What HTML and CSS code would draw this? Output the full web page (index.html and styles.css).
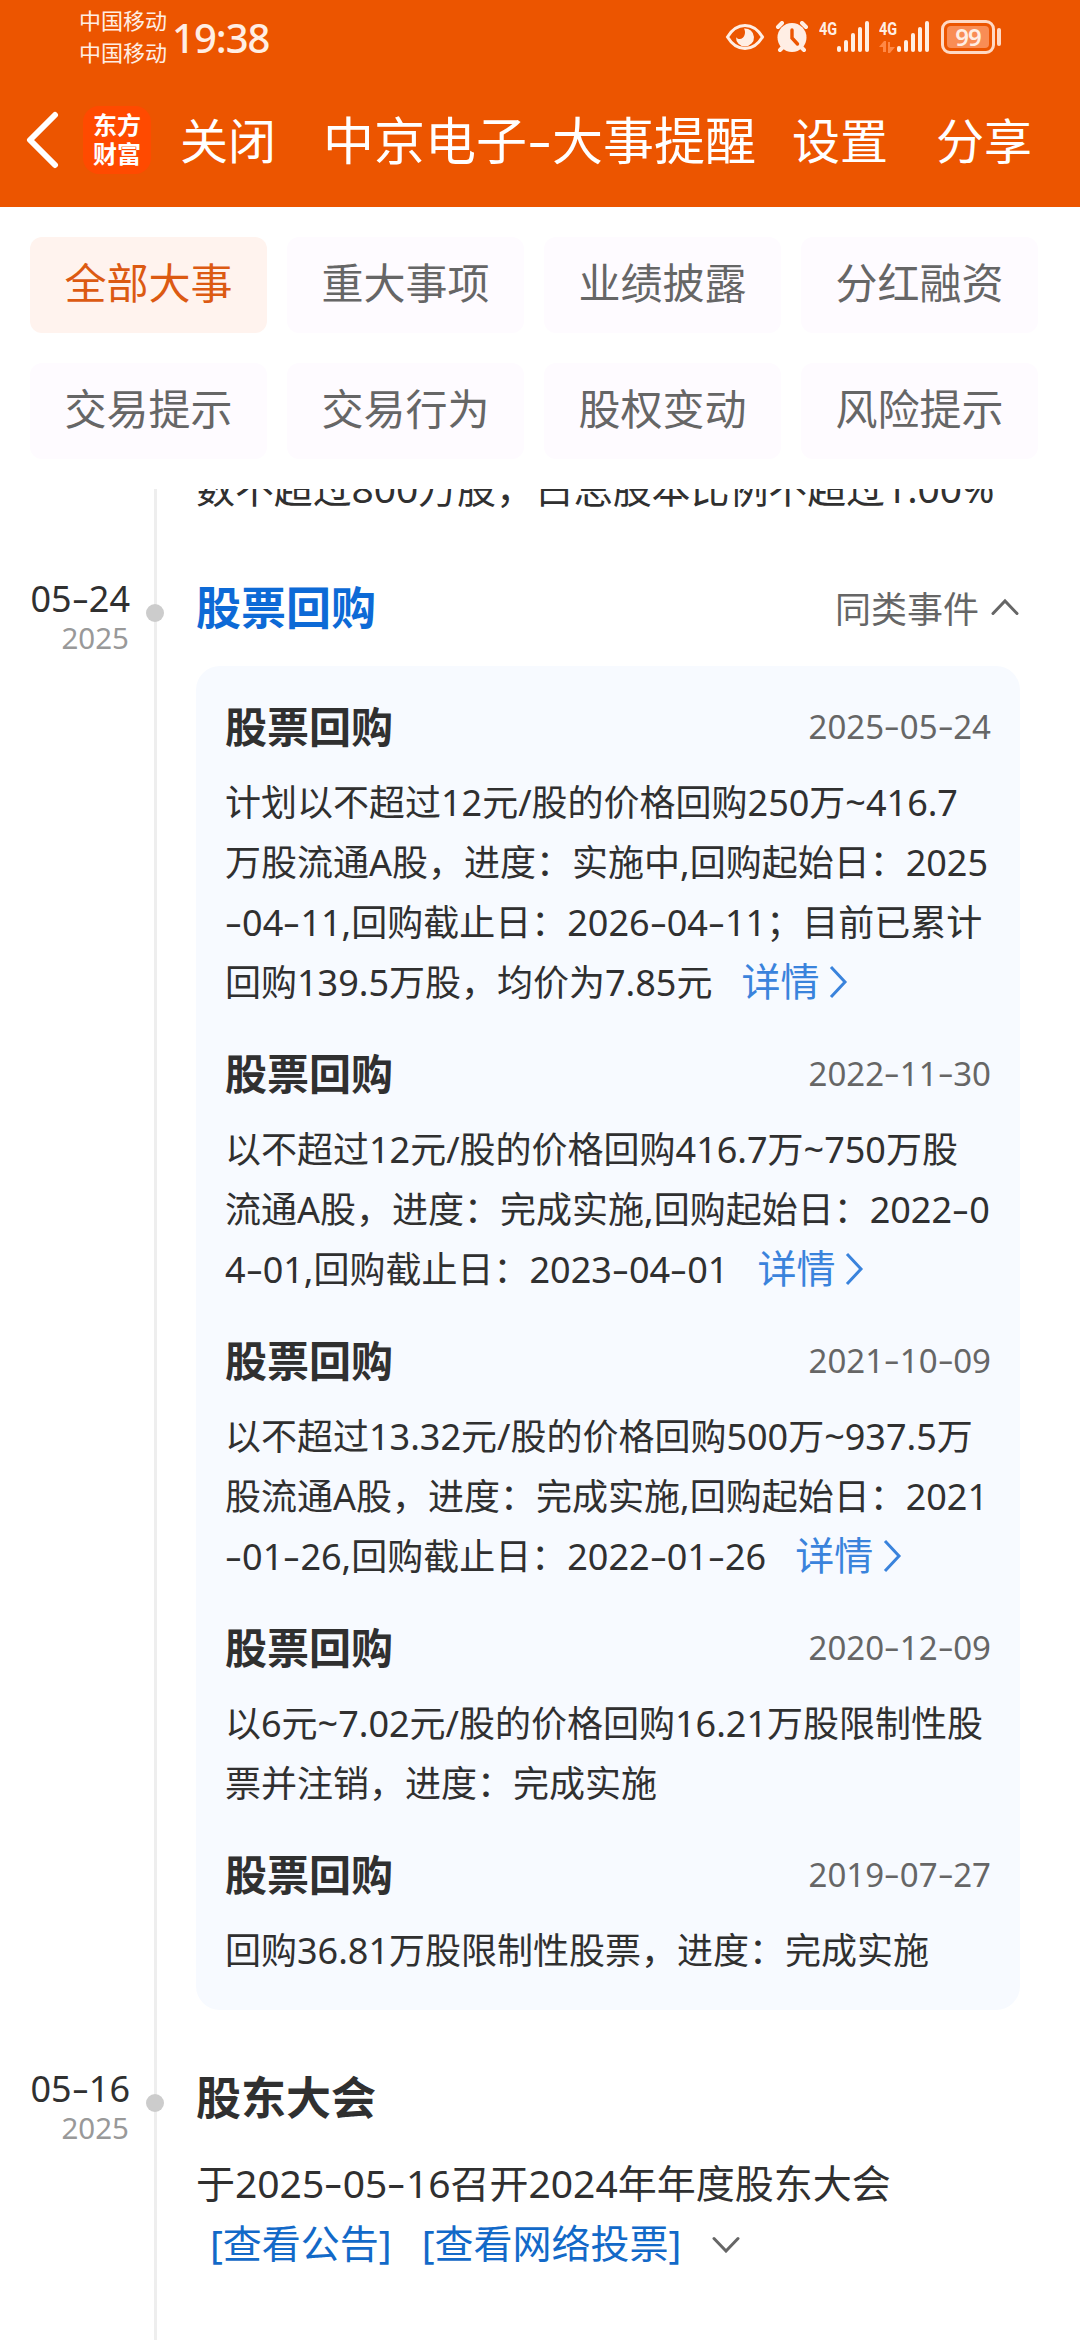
FILE: index.html
```html
<!DOCTYPE html>
<html lang="zh-CN">
<head>
  <meta charset="UTF-8">
  <meta name="viewport" content="width=device-width, initial-scale=1.0">
  <title>中京电子-大事提醒</title>
  <link rel="stylesheet" href="styles.css">
</head>
<body>

  <header class="header">
    <!-- Status bar -->
    <div class="status-bar">
      <div class="carriers">
        <span>中国移动</span>
        <span>中国移动</span>
      </div>
      <span class="time">19:38</span>

      <div class="status-icons">
        <svg class="icon-eye" width="40" height="28" viewBox="0 0 40 28">
          <path d="M2.500 14C7 6.500 13 2.500 20 2.500S33 6.500 37.500 14C33 21.500 27 25.500 20 25.500S7 21.500 2.500 14z" fill="none" stroke="#ffeee4" stroke-width="3"/>
          <path d="M19 5.500a9 9 0 1 1-8 8.500c1.500 2.500 4.800 2.600 6.800.8 2.300-2.100 3-6 1.200-9.300z" fill="#ffeee4"/>
        </svg>
        <svg class="icon-alarm" width="34" height="32" viewBox="0 0 34 32">
          <g stroke="#ffeee4" stroke-width="4" stroke-linecap="round">
            <path d="M3 6l4-4M27 2l4 4M5 29l4-4M29 29l-4-4"/>
          </g>
          <circle cx="17" cy="16.500" r="14.500" fill="#ffeee4"/>
          <path d="M17 9v8l5.500 6" fill="none" stroke="#ec5500" stroke-width="3.400" stroke-linecap="round"/>
        </svg>
        <div class="signal">
          <span class="net">4G</span>
          <svg width="33" height="32" viewBox="0 0 33 32" fill="#ffeee4">
            <rect x="0" y="25" width="4" height="6" rx="2"/>
            <rect x="7" y="19" width="4" height="12" rx="2"/>
            <rect x="14" y="12" width="4" height="19" rx="2"/>
            <rect x="21" y="6" width="4" height="25" rx="2"/>
            <rect x="28" y="0" width="4" height="31" rx="2"/>
          </svg>
        </div>
        <div class="signal">
          <div class="net-box">
            <span class="net">4G</span>
            <svg class="arrows" width="16" height="12" viewBox="0 0 16 12" fill="#ff8845">
              <path d="M0 6l5-6h2v11H4V6zM16 6l-5 6H9V1h2v5z"/>
            </svg>
          </div>
          <svg width="33" height="32" viewBox="0 0 33 32" fill="#ffeee4">
            <rect x="0" y="25" width="4" height="6" rx="2"/>
            <rect x="7" y="19" width="4" height="12" rx="2"/>
            <rect x="14" y="12" width="4" height="19" rx="2"/>
            <rect x="21" y="6" width="4" height="25" rx="2"/>
            <rect x="28" y="0" width="4" height="31" rx="2"/>
          </svg>
        </div>
        <div class="battery"><span>99</span></div>
        <div class="battery-tip"></div>
      </div>
    </div>

    <!-- Navigation -->
    <nav class="nav">
      <svg class="back" width="34" height="58" viewBox="0 0 34 58">
        <path d="M29 4L4 29l25 25" fill="none" stroke="#fff" stroke-width="6" stroke-linecap="round" stroke-linejoin="round"/>
      </svg>
      <div class="logo">东方<br>财富</div>
      <a class="nav-link close">关闭</a>
      <h1 class="nav-title">中京电子<i class="dash">-</i>大事提醒</h1>
      <a class="nav-link">设置</a>
      <a class="nav-link share">分享</a>
    </nav>
  </header>

  <!-- Filter tabs -->
  <div class="tabs">
    <div class="tab active">全部大事</div>
    <div class="tab">重大事项</div>
    <div class="tab">业绩披露</div>
    <div class="tab">分红融资</div>
    <div class="tab">交易提示</div>
    <div class="tab">交易行为</div>
    <div class="tab">股权变动</div>
    <div class="tab">风险提示</div>
  </div>

  <!-- Timeline -->
  <main class="timeline">
    <div class="event previous">
      <div class="event-date"></div>
      <div class="axis"></div>
      <div class="event-content">
        <p class="event-text">数不超过800万股，占总股本比例不超过1.00%</p>
      </div>
    </div>

    <div class="event">
      <div class="event-date">
        <div class="day">05<i class="dash">-</i>24</div>
        <div class="year">2025</div>
      </div>
      <div class="axis"><i class="dot"></i></div>
      <div class="event-content">
        <div class="event-head">
          <h2 class="blue">股票回购</h2>
          <div class="similar">同类事件
            <svg width="30" height="20" viewBox="0 0 30 20">
              <path d="M3 16.500L15 4l12 12.500" fill="none" stroke="#666" stroke-width="3" stroke-linecap="round"/>
            </svg>
          </div>
        </div>

        <div class="card">
          <div class="item">
            <div class="item-head"><h3>股票回购</h3><span class="item-date">2025<i class="dash">-</i>05<i class="dash">-</i>24</span></div>
            <p>计划以不超过12元/股的价格回购250万~416.7<br>万股流通A股，进度：实施中,回购起始日：2025<br><i class="dash">-</i>04<i class="dash">-</i>11,回购截止日：2026<i class="dash">-</i>04<i class="dash">-</i>11；目前已累计<br>回购139.5万股，均价为7.85元<a class="detail">详情<svg width="20" height="34" viewBox="0 0 20 34"><path d="M3 2l14 15L3 32" fill="none" stroke="#3a83dc" stroke-width="3"/></svg></a></p>
          </div>
          <div class="item">
            <div class="item-head"><h3>股票回购</h3><span class="item-date">2022<i class="dash">-</i>11<i class="dash">-</i>30</span></div>
            <p>以不超过12元/股的价格回购416.7万~750万股<br>流通A股，进度：完成实施,回购起始日：2022<i class="dash">-</i>0<br>4<i class="dash">-</i>01,回购截止日：2023<i class="dash">-</i>04<i class="dash">-</i>01<a class="detail">详情<svg width="20" height="34" viewBox="0 0 20 34"><path d="M3 2l14 15L3 32" fill="none" stroke="#3a83dc" stroke-width="3"/></svg></a></p>
          </div>
          <div class="item">
            <div class="item-head"><h3>股票回购</h3><span class="item-date">2021<i class="dash">-</i>10<i class="dash">-</i>09</span></div>
            <p>以不超过13.32元/股的价格回购500万~937.5万<br>股流通A股，进度：完成实施,回购起始日：2021<br><i class="dash">-</i>01<i class="dash">-</i>26,回购截止日：2022<i class="dash">-</i>01<i class="dash">-</i>26<a class="detail">详情<svg width="20" height="34" viewBox="0 0 20 34"><path d="M3 2l14 15L3 32" fill="none" stroke="#3a83dc" stroke-width="3"/></svg></a></p>
          </div>
          <div class="item">
            <div class="item-head"><h3>股票回购</h3><span class="item-date">2020<i class="dash">-</i>12<i class="dash">-</i>09</span></div>
            <p>以6元~7.02元/股的价格回购16.21万股限制性股<br>票并注销，进度：完成实施</p>
          </div>
          <div class="item">
            <div class="item-head"><h3>股票回购</h3><span class="item-date">2019<i class="dash">-</i>07<i class="dash">-</i>27</span></div>
            <p>回购36.81万股限制性股票，进度：完成实施</p>
          </div>
        </div>
      </div>
    </div>

    <div class="event last">
      <div class="event-date">
        <div class="day">05<i class="dash">-</i>16</div>
        <div class="year">2025</div>
      </div>
      <div class="axis"><i class="dot"></i></div>
      <div class="event-content">
        <div class="event-head">
          <h2>股东大会</h2>
        </div>
        <p class="event-text meeting">于2025<i class="dash">-</i>05<i class="dash">-</i>16召开2024年年度股东大会</p>
        <div class="links">
          <a>[查看公告]</a>
          <a>[查看网络投票]</a>
          <svg width="30" height="20" viewBox="0 0 30 20">
            <path d="M3 5.500L15 18 27 5.500" fill="none" stroke="#666" stroke-width="3" stroke-linecap="round"/>
          </svg>
        </div>
      </div>
    </div>
  </main>

</body>
</html>
```
FILE: styles.css
```css
* {
  box-sizing: border-box;
}

body {
  margin: 0;
  width: 1080px;
  height: 2340px;
  display: flex;
  flex-direction: column;
  overflow: hidden;
  background-color: #fff;
  color: #303030;
  font-family: "Noto Sans", "Noto Sans CJK SC", sans-serif;
  white-space: nowrap;
}

h1, h2, h3, p {
  margin: 0;
}

svg {
  flex: none;
  display: block;
}

/* Wide hyphen used in dates and the page title */
.dash {
  display: inline-block;
  width: 0.475em;
  font-style: normal;
  text-align: center;
  transform: translateY(-1px) scaleX(1.5);
}

/* Header */
.header {
  height: 207px;
  flex: none;
  background-color: #ec5500;
  color: #fff;
}

.status-bar {
  height: 75px;
  display: flex;
  align-items: center;
  padding-left: 79px;
  padding-right: 79px;
  color: #ffeee4;
}

.carriers {
  display: flex;
  flex-direction: column;
  padding-bottom: 4px;
  font-size: 22px;
  line-height: 32px;
}

.time {
  margin-left: 5px;
  font-size: 40px;
  font-weight: 500;
  line-height: 73px;
  letter-spacing: -1px;
}

.status-icons {
  margin-left: auto;
  display: flex;
  align-items: center;
  padding-bottom: 2px;
}

.icon-alarm {
  margin-left: 10px;
}

.signal {
  display: flex;
  align-items: flex-start;
  height: 32px;
  margin-left: 10px;
}

.signal + .signal {
  margin-left: 9px;
}

.net {
  display: block;
  width: 18px;
  font-family: "Roboto", sans-serif;
  font-size: 19px;
  font-weight: 700;
  line-height: 15px;
  transform: scaleX(0.76);
  transform-origin: left;
}

.net-box {
  display: flex;
  flex-direction: column;
  gap: 5px;
}

.battery {
  width: 54px;
  height: 34px;
  margin-left: 11px;
  padding: 3px;
  border: 3px solid #ffd9c4;
  border-radius: 9px;
}

.battery span {
  display: block;
  height: 22px;
  border-radius: 4px;
  background-color: #f98d55;
  font-size: 24px;
  font-weight: 600;
  line-height: 21px;
  letter-spacing: -1px;
  text-align: center;
}

.battery-tip {
  width: 4px;
  height: 18px;
  margin-left: 2px;
  border-radius: 2px;
  background-color: #ffd9c4;
}

.nav {
  height: 132px;
  display: flex;
  align-items: center;
  padding-left: 26px;
  padding-bottom: 3px;
}

.logo {
  width: 68px;
  height: 68px;
  margin-left: 23px;
  padding-top: 3px;
  border-radius: 16px;
  background-color: #ff4a00;
  font-family: "Noto Sans CJK SC", sans-serif;
  font-size: 24px;
  font-weight: 700;
  line-height: 29px;
  text-align: center;
}

.nav-link {
  padding-bottom: 3px;
  font-size: 48px;
}

.close {
  margin-left: 29px;
}

.share {
  margin-left: 48px;
}

.nav-title {
  width: 433px;
  margin-left: 47px;
  margin-right: 36px;
  padding-bottom: 3px;
  font-size: 51px;
  font-weight: 400;
}

.nav-title .dash {
  width: 25px;
}

/* Filter tabs */
.tabs {
  flex: none;
  display: grid;
  grid-template-columns: repeat(4, 237px);
  grid-auto-rows: 96px;
  gap: 30px 20px;
  padding: 30px;
}

.tab {
  border-radius: 12px;
  background-color: #fefbff;
  color: #666;
  font-size: 42px;
  line-height: 91px;
  text-align: center;
}

.tab.active {
  background-color: #fff3ee;
  color: #dc5a12;
}

/* Timeline */
.timeline {
  flex: 1;
  min-height: 0;
  display: flex;
  flex-direction: column;
  overflow: hidden;
}

.event {
  flex: none;
  display: flex;
}

.event.previous {
  margin-top: -31px;
  height: 62px;
}

.event.last {
  flex: 1;
}

.event-date {
  width: 131px;
  padding-right: 1px;
  text-align: right;
}

.event:not(.previous) .event-date {
  padding-top: 59px;
}

.event:not(.previous) .event-content {
  padding-top: 58px;
}

.day {
  font-size: 36px;
  line-height: 40px;
}

.year {
  padding-right: 1px;
  color: #999;
  font-size: 29.5px;
  line-height: 38px;
}

.axis {
  position: relative;
  width: 3px;
  margin-left: 23px;
  margin-right: 39px;
  background-color: #eee;
}

.dot {
  position: absolute;
  top: 84px;
  left: -8px;
  width: 18px;
  height: 18px;
  border-radius: 50%;
  background-color: #ccc;
}

.event-content {
  width: 824px;
}

.event-head {
  height: 60px;
  display: flex;
  align-items: center;
  justify-content: space-between;
}

.event-head h2 {
  font-size: 45px;
  line-height: 60px;
}

.event-head .blue {
  color: #0d6ad6;
}

.similar {
  display: flex;
  align-items: center;
  gap: 11px;
  padding-bottom: 2px;
  color: #666;
  font-size: 36px;
}

.event-text {
  font-size: 39px;
  line-height: 60px;
}

.previous .event-text {
  letter-spacing: -0.1px;
}

.meeting {
  margin-top: 25px;
}

.links {
  display: flex;
  align-items: center;
  padding-left: 14px;
  color: #1269c8;
  font-size: 39px;
  line-height: 60px;
}

.links a {
  margin-right: 30px;
}

/* Similar events card */
.card {
  margin-top: 28px;
  padding: 31px 29px 29px;
  border-radius: 24px;
  background-color: #f7faff;
}

.item + .item {
  margin-top: 31px;
}

.item-head {
  height: 60px;
  display: flex;
  align-items: center;
  justify-content: space-between;
}

.item-head h3 {
  font-size: 42px;
  line-height: 60px;
}

.item-date {
  padding-bottom: 2px;
  color: #666;
  font-size: 33px;
}

.item p {
  margin-top: 16px;
  font-size: 36px;
  line-height: 60px;
}

.detail {
  margin-left: 29px;
  color: #3a83dc;
  font-size: 39px;
  line-height: 1;
}

.detail svg {
  display: inline-block;
  margin-left: 9px;
  vertical-align: -3px;
}
```
